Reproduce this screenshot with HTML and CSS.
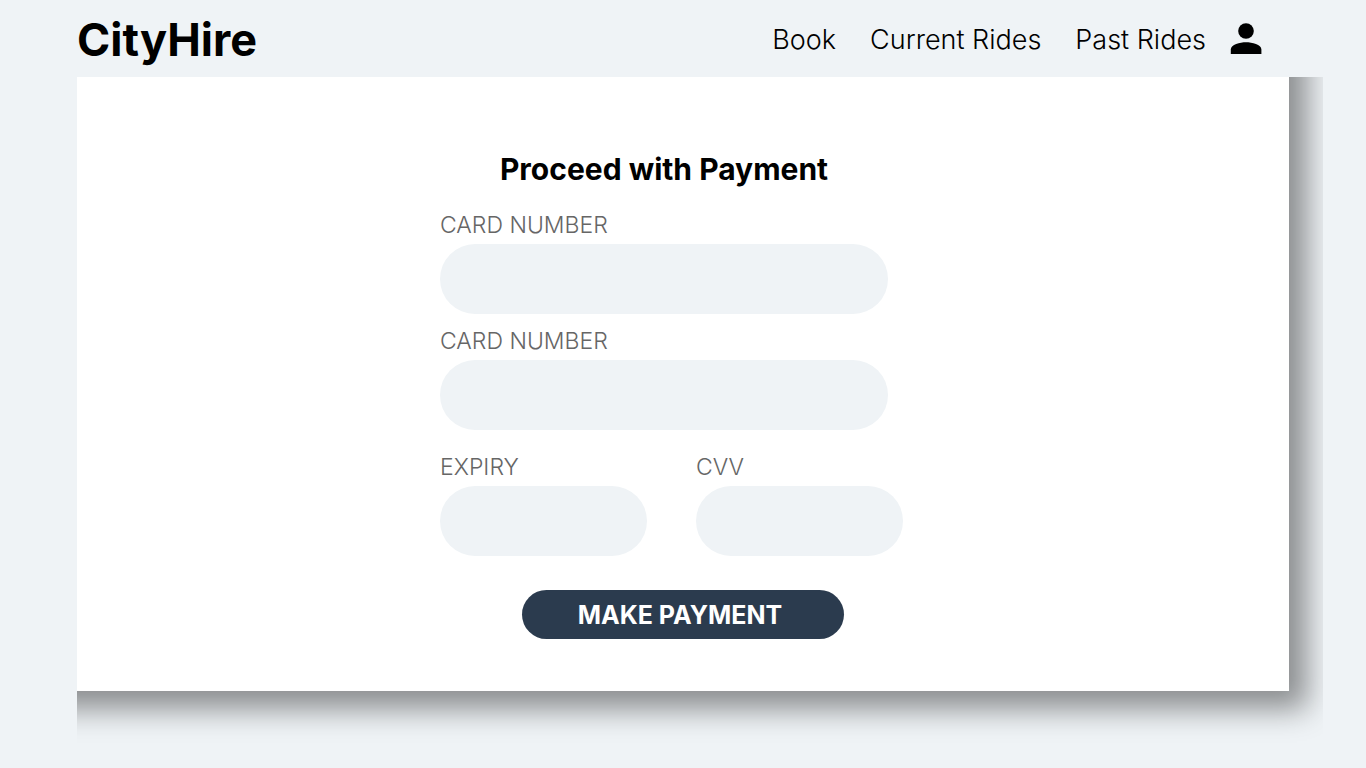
FILE: index.html
```html
<!DOCTYPE html>
<html lang="en">
<head>
<meta charset="utf-8">
<meta name="viewport" content="width=device-width, initial-scale=1">
<title>CityHire – Payment</title>
<link rel="stylesheet" href="styles.css">
</head>
<body>
<header class="topbar">
  <a class="brand" href="#">CityHire</a>
  <nav class="nav">
    <a class="nav-link" href="#">Book</a>
    <a class="nav-link" href="#">Current Rides</a>
    <a class="nav-link" href="#">Past Rides</a>
    <a class="profile" href="#" aria-label="Profile">
      <svg viewBox="0 0 32 32" width="32" height="32"><circle cx="16" cy="8" r="7.8"/><path d="M0.8 31V26.5C0.8 21.5 10 19.2 16 19.2S31.4 21.5 31.4 26.5V31Z"/></svg>
    </a>
  </nav>
</header>
<main class="panel-area">
  <section class="panel">
    <form class="payment">
      <h1 class="title">Proceed with Payment</h1>
      <div class="field">
        <label class="label" for="card-a">CARD NUMBER</label>
        <input class="input" id="card-a" type="text">
      </div>
      <div class="field">
        <label class="label" for="card-b">CARD NUMBER</label>
        <input class="input" id="card-b" type="text">
      </div>
      <div class="pair">
        <div class="field">
          <label class="label" for="expiry">EXPIRY</label>
          <input class="input" id="expiry" type="text">
        </div>
        <div class="field">
          <label class="label" for="cvv">CVV</label>
          <input class="input" id="cvv" type="text">
        </div>
      </div>
      <button class="submit" type="button">MAKE PAYMENT</button>
    </form>
  </section>
</main>
</body>
</html>
```
FILE: styles.css
```css
* { box-sizing: border-box; }
body {
  margin: 0;
  min-height: 100vh;
  background: #eff3f6;
  color: #000;
  font-family: Inter, "Open Sans", sans-serif;
}
a { color: inherit; text-decoration: none; }
.topbar {
  display: flex;
  align-items: center;
  justify-content: space-between;
  height: 77px;
  padding: 0 104px 0 77px;
}
.brand { padding-top: 2px; font-size: 45px; font-weight: 700; line-height: 48px; }
.nav { display: flex; align-items: center; gap: 34px; font-size: 27px; font-weight: 300; line-height: 32px; }
.nav-link { padding-top: 2px; }
.profile { display: flex; margin-left: -10px; }
.panel-area { margin: 0 43px 0 77px; padding: 0 34px 77px 0; overflow: hidden; }
.panel {
  display: flex;
  justify-content: center;
  min-height: 614px;
  padding: 76px 0 52px;
  background: #fff;
  box-shadow: -12px -12px 28px 30px rgba(0, 0, 0, 0.42);
}
.payment { display: flex; flex-direction: column; width: 486px; }
.title { margin: 0 38px 24px 0; font-size: 30px; font-weight: 700; line-height: 32px; text-align: center; }
.field { display: flex; flex-direction: column; width: 448px; margin-bottom: 11px; }
.label { margin-bottom: 3px; color: #666; font-size: 23px; font-weight: 300; line-height: 32px; }
.input { width: 100%; height: 70px; padding: 0 32px; border: 0; border-radius: 35px; background: #eff3f6; font: inherit; font-size: 23px; }
.pair { display: flex; gap: 49px; margin-top: 10px; }
.pair .field { width: 207px; }
.submit { width: 322px; height: 49px; margin: 23px 0 0 82px; padding: 0 6px 0 0; border: 0; border-radius: 25px; background: #2b3b4e; color: #fff; font: inherit; font-size: 25px; font-weight: 700; }
```
